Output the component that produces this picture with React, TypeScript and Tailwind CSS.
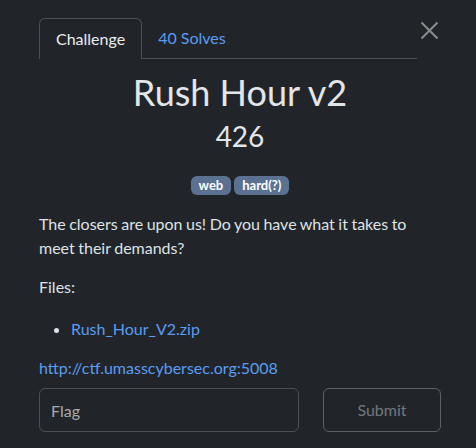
const App = () => {
  return (
    <div className="relative w-[476px] h-[448px] overflow-hidden bg-[#212529] text-[#dee2e6] font-['Lato','Liberation_Sans',sans-serif]">
      <button className="absolute top-[21px] left-[420px] text-[#8a8d90]">
        <svg width="19" height="19" viewBox="0 0 19 19" fill="none" stroke="currentColor" strokeWidth="2">
          <path d="M1.5 1.5 L17.5 17.5 M17.5 1.5 L1.5 17.5" />
        </svg>
      </button>

      <div className="pl-[39px] pr-[35px] pt-[18px]">
        <nav className="flex w-[378px] border-b border-[#4b5056]">
          <div className="-mb-px px-4 py-2 border border-b-0 border-[#4b5056] rounded-t-md bg-[#212529] text-[16px] leading-6 text-[#e9ecef]">
            Challenge
          </div>
          <div className="px-4 py-2 text-[16px] leading-6 text-[#5b9cf2]">40 Solves</div>
        </nav>

        <div className="text-center">
          <h2 className="mt-[11px] text-[36px] leading-[44px] font-normal text-[#e3e6e9]">Rush Hour v2</h2>
          <h3 className="mt-[5px] text-[28px] leading-[34px] font-normal text-[#e3e6e9]">426</h3>
          <div className="mt-[23px] flex justify-center gap-[3px]">
            <span className="rounded-[6px] bg-[#5a7191] px-2 text-[13px] leading-[19px] font-bold text-white">web</span>
            <span className="rounded-[6px] bg-[#5a7191] px-2 text-[13px] leading-[19px] font-bold text-white">hard(?)</span>
          </div>
        </div>

        <p className="mt-[17px] text-[16px] leading-6 text-[#dee2e6] [word-spacing:-0.6px]">
          The closers are upon us! Do you have what it takes to meet their demands?
        </p>

        <p className="mt-[15px] text-[16px] leading-6">Files:</p>
        <ul className="mt-[18px] list-disc pl-[32px] text-[16px] leading-6 marker:text-[#dee2e6]">
          <li>
            <a className="text-[#5b9cf2]">Rush_Hour_V2.zip</a>
          </li>
        </ul>

        <p className="mt-[15px] text-[16px] leading-6">
          <a className="text-[#5b9cf2]">http://ctf.umasscybersec.org:5008</a>
        </p>

        <div className="mt-[8px] flex items-center justify-between">
          <input
            placeholder="Flag"
            className="h-[44px] w-[260px] rounded-[6px] border border-[#4b5056] bg-transparent px-[11px] text-[16px] placeholder:text-[#a8abae] outline-none"
          />
          <button className="h-[44px] w-[118px] rounded-[6px] border border-[#5c6166] text-[16px] text-[#73787d]">
            Submit
          </button>
        </div>
      </div>
    </div>
  );
};

export default App;
